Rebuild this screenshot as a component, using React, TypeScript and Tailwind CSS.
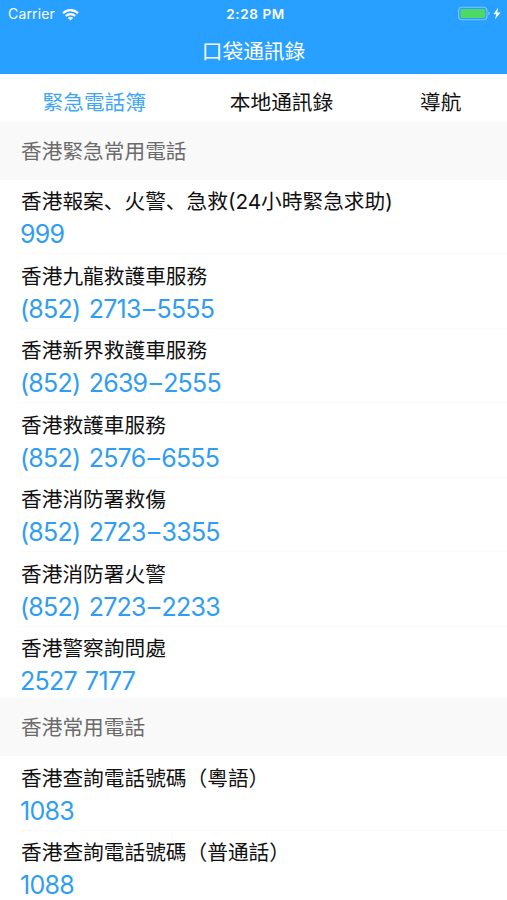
import React from 'react';

const groups = [
  {
    title: '香港緊急常用電話',
    contacts: [
      { name: '香港報案、火警、急救(24小時緊急求助)', phone: '999' },
      { name: '香港九龍救護車服務', phone: '(852) 2713–5555' },
      { name: '香港新界救護車服務', phone: '(852) 2639–2555' },
      { name: '香港救護車服務', phone: '(852) 2576–6555' },
      { name: '香港消防署救傷', phone: '(852) 2723–3355' },
      { name: '香港消防署火警', phone: '(852) 2723–2233' },
      { name: '香港警察詢問處', phone: '2527 7177' },
    ],
  },
  {
    title: '香港常用電話',
    contacts: [
      { name: '香港查詢電話號碼（粵語）', phone: '1083' },
      { name: '香港查詢電話號碼（普通話）', phone: '1088' },
    ],
  },
];

const StatusBar = () => (
  <div className="grid h-7 grid-cols-3 items-center pl-2 pr-1 text-[14px] leading-7">
    <div className="flex items-center gap-[7px]">
      <span className="tracking-[0.15px]">Carrier</span>
      <svg width="17" height="13" viewBox="0 0 17 13" fill="none" stroke="currentColor" strokeWidth="2.2">
        <path d="M1 5.1a10.8 10.8 0 0 1 15 0" />
        <path d="M3.8 8a6.8 6.8 0 0 1 9.4 0" />
        <path d="M8.5 12.6 5.9 9.9a3.8 3.8 0 0 1 5.2 0z" fill="currentColor" stroke="none" />
      </svg>
    </div>
    <span className="text-center text-[13.5px] font-semibold tracking-[0.6px]">2:28 PM</span>
    <div className="flex items-center justify-end">
      <svg width="48" height="16" viewBox="0 0 48 16">
        <rect x="3.7" y="1.2" width="28.2" height="12.6" rx="3" fill="none" stroke="#7cc5fb" strokeWidth="1.1" />
        <rect x="5.4" y="3" width="24.8" height="9" rx="1.4" fill="#4cd964" />
        <path d="M33.2 5.6c2 .5 2 3.4 0 3.9z" fill="#7cc5fb" />
        <path d="M43.2 1.6 38.4 8.2h3l-1.5 5.2 5.6-7h-3.3z" fill="#fff" />
      </svg>
    </div>
  </div>
);

// the dash in a number sits slightly apart from the digits
const Phone = ({ value }: { value: string }) => {
  const [head, tail] = value.split('–');
  return (
    <p className="-ml-px h-8 text-[25px] leading-8 tracking-[-0.75px] [word-spacing:2px] text-[#2f9df4]">
      {head}
      {tail && (
        <>
          <span className="mx-[2px]">–</span>
          {tail}
        </>
      )}
    </p>
  );
};

const App = () => {
  return (
    <div className="h-[900px] w-full overflow-hidden bg-white font-['Inter','Noto_Sans_CJK_SC',sans-serif] text-[#111]">
      <header className="h-[74px] bg-[#27a0ff] text-white">
        <StatusBar />
        <h1 className="text-center text-[20.7px] leading-[47px]">口袋通訊錄</h1>
      </header>

      <nav className="flex h-12 justify-between pl-[42.5px] pr-[45.5px] text-[20.7px] leading-[58px]">
        <span className="text-[#3ea6f4]">緊急電話簿</span>
        <span className="-ml-[3px]">本地通訊錄</span>
        <span>導航</span>
      </nav>

      {groups.map((group) => (
        <section key={group.title} className="group">
          <h2 className="h-[57.5px] bg-[#f9f9f9] pl-[21px] text-[20.7px] leading-[60px] text-[#6b6b6b]">
            {group.title}
          </h2>
          <ul>
            {group.contacts.map((contact) => (
              <li
                key={contact.name}
                className="h-[74.5px] pl-[21px] pt-[5.5px] last:h-[71.5px] group-last:pt-[6px]"
              >
                <p className="h-[33px] whitespace-nowrap text-[20.7px] leading-[33px]">{contact.name}</p>
                <Phone value={contact.phone} />
                <div className="mt-[3px] h-px bg-[#fafafa]" />
              </li>
            ))}
          </ul>
        </section>
      ))}
    </div>
  );
};

export default App;
